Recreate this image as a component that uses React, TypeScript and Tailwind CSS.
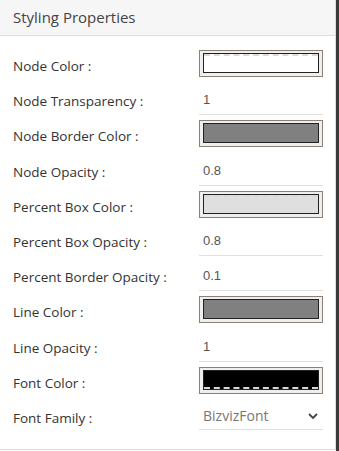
import React from "react";

type Row =
  | { label: string; kind: "color"; color: string; dash?: "top" | "bottom" }
  | { label: string; kind: "value"; value: string }
  | { label: string; kind: "select"; value: string };

const rows: Row[] = [
  { label: "Node Color :", kind: "color", color: "#ffffff", dash: "top" },
  { label: "Node Transparency :", kind: "value", value: "1" },
  { label: "Node Border Color :", kind: "color", color: "#808080" },
  { label: "Node Opacity :", kind: "value", value: "0.8" },
  { label: "Percent Box Color :", kind: "color", color: "#dfdfdf", dash: "top" },
  { label: "Percent Box Opacity :", kind: "value", value: "0.8" },
  { label: "Percent Border Opacity :", kind: "value", value: "0.1" },
  { label: "Line Color :", kind: "color", color: "#808080" },
  { label: "Line Opacity :", kind: "value", value: "1" },
  { label: "Font Color :", kind: "color", color: "#000000", dash: "bottom" },
  { label: "Font Family :", kind: "select", value: "BizvizFont" },
];

const Swatch = ({ color, dash }: { color: string; dash?: "top" | "bottom" }) => (
  <div className="h-[27px] w-[124px] border border-[#8c7f73] bg-[#efefef] pt-[2px] pb-[3px] px-[3px]">
    <div className="relative h-full w-full border border-[#222]" style={{ backgroundColor: color }}>
      {dash === "top" && (
        <div className="absolute left-0 right-0 top-0 border-t-2 border-dashed border-[#dadada]" />
      )}
      {dash === "bottom" && (
        <div className="absolute left-0 right-0 bottom-0 border-b-2 border-dashed border-[#d8d8d8]" />
      )}
    </div>
  </div>
);

const App = () => {
  return (
    <div className="flex h-[451px] w-[339px] bg-white" style={{ fontFamily: "'Open Sans', sans-serif" }}>
      <div className="h-[450px] w-[336px] border-r border-b border-[#dcdcdc] bg-white">
        <div className="flex h-[36px] items-center border-b border-[#dddddd] bg-[#f6f6f6] px-[13px] text-[15px] text-[#444]">
          Styling Properties
        </div>
        <div className="flex flex-col gap-[5.2px] pt-[14px] pl-[13px] pr-[12px]">
          {rows.map((r) => (
            <div key={r.label} className="flex h-[30px] items-start justify-between">
              <span className="pt-[6px] text-[13.5px] text-[#333]">{r.label}</span>
              {r.kind === "color" && <Swatch color={r.color} dash={r.dash} />}
              {r.kind === "value" && (
                <div
                  className="flex h-[30px] w-[124px] items-start border-b border-[#e0e0e0] pl-[4px] pt-[5px] text-[13px] text-[#555]"
                  style={{ fontFamily: "'Liberation Sans', Arial, sans-serif" }}
                >
                  {r.value}
                </div>
              )}
              {r.kind === "select" && (
                <div className="flex h-[28px] w-[124px] items-start justify-between border-b border-[#e0e0e0] pl-[4px] pr-[4px] pt-[3px] text-[14px] text-[#777]">
                  <span>{r.value}</span>
                  <svg width="12" height="12" viewBox="0 0 12 12" className="mt-[5px]">
                    <path d="M2 4 L6 8 L10 4" fill="none" stroke="#444" strokeWidth="1.8" />
                  </svg>
                </div>
              )}
            </div>
          ))}
        </div>
      </div>
      <div className="flex-1 bg-[#3a3a3a]" />
    </div>
  );
};

export default App;
